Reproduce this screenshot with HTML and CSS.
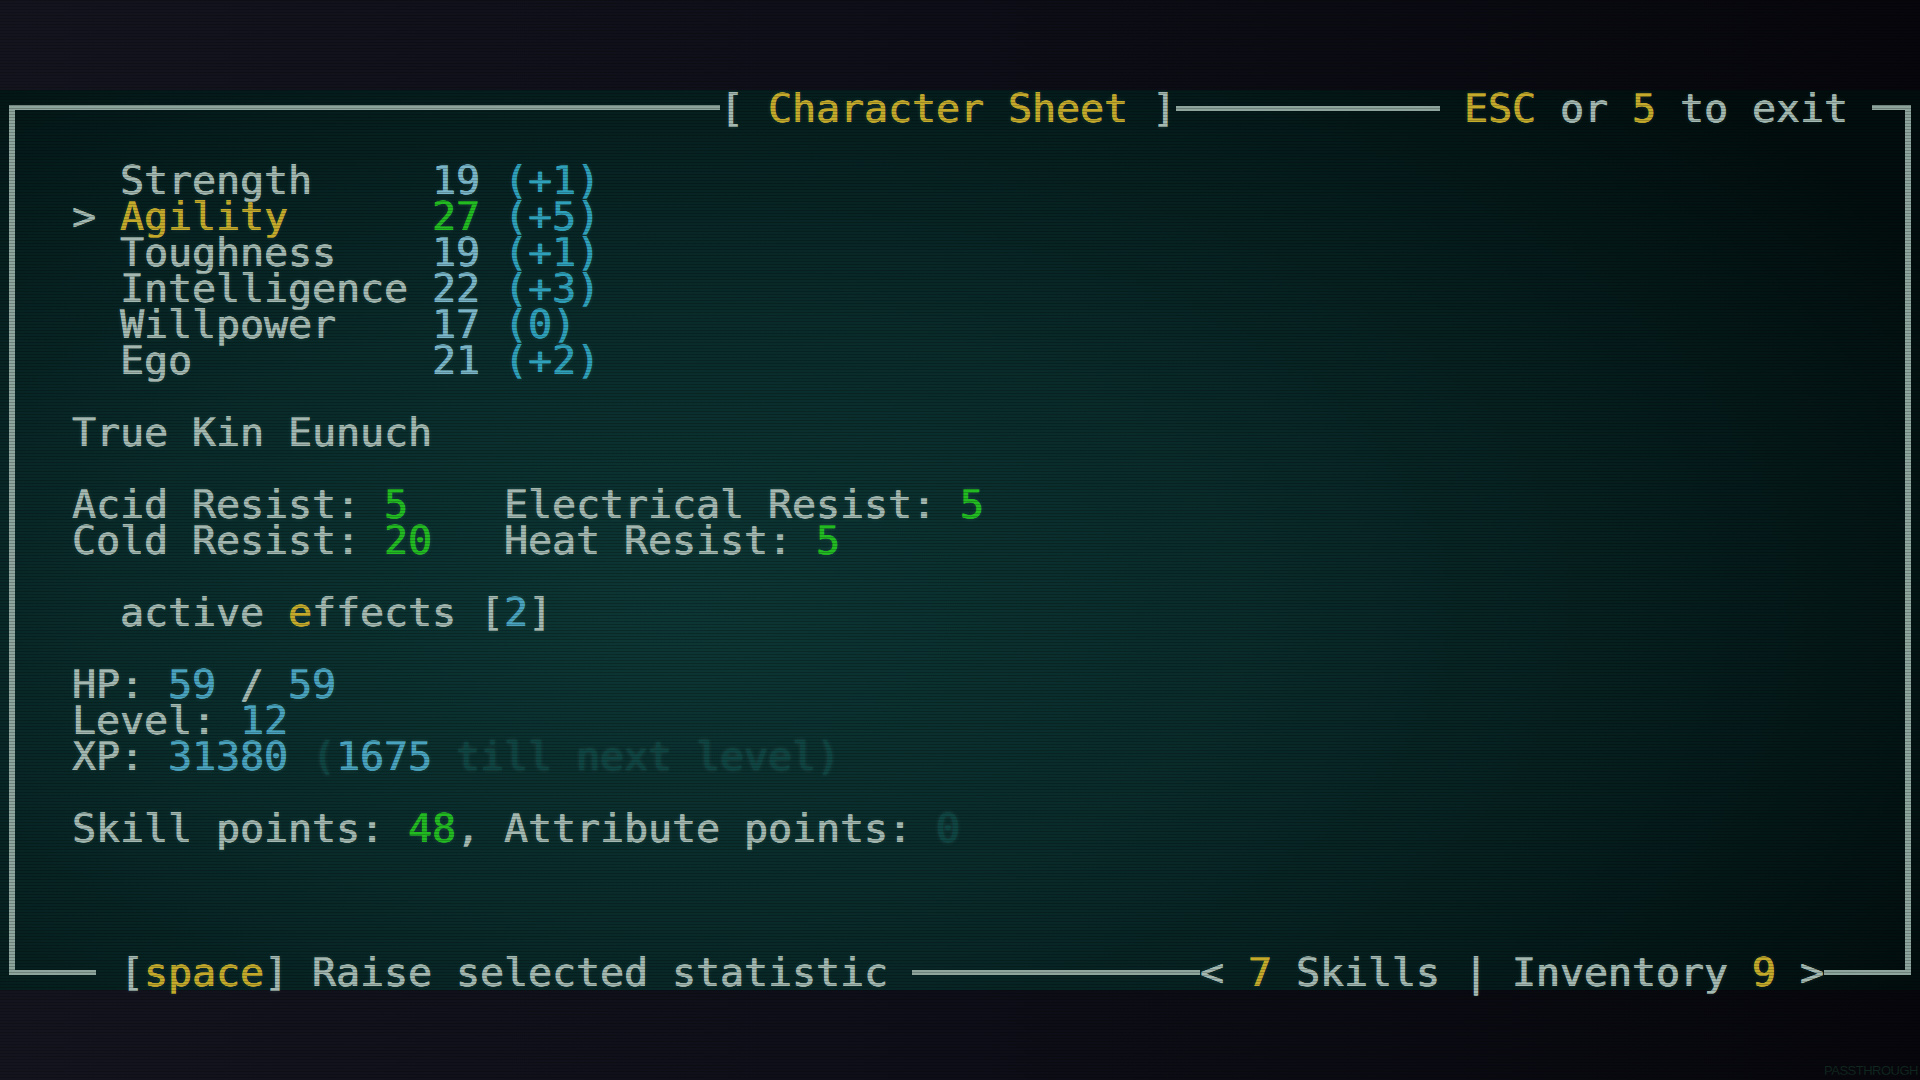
FILE: index.html
```html
<!DOCTYPE html>
<html lang="en">
<head>
<meta charset="utf-8">
<title>Character Sheet</title>
<link rel="stylesheet" href="styles.css">
</head>
<body>
<div class="screen">
  <div class="term">
    <div class="frame-row top">
      <span class="corner-tl"></span><span class="txt"><span class="g">[</span><span class="y"> Character Sheet </span><span class="g">]</span></span><span class="seg seg-top"></span><span class="txt"> <span class="y">ESC</span><span class="g"> or </span><span class="y">5</span><span class="g"> to exit</span> </span><span class="corner-tr"></span>
    </div>
    <div class="body">
      <div class="row"> </div>
      <div class="row"><span class="g">  Strength     </span><span class="v">19</span> <span class="c">(+1)</span></div>
      <div class="row"><span class="g">&gt; </span><span class="y">Agility</span>      <span class="gr">27</span> <span class="c">(+5)</span></div>
      <div class="row"><span class="g">  Toughness    </span><span class="v">19</span> <span class="c">(+1)</span></div>
      <div class="row"><span class="g">  Intelligence </span><span class="v">22</span> <span class="c">(+3)</span></div>
      <div class="row"><span class="g">  Willpower    </span><span class="v">17</span> <span class="c">(0)</span></div>
      <div class="row"><span class="g">  Ego          </span><span class="v">21</span> <span class="c">(+2)</span></div>
      <div class="row"> </div>
      <div class="row"><span class="g">True Kin Eunuch</span></div>
      <div class="row"> </div>
      <div class="row"><span class="g">Acid Resist: </span><span class="gr">5</span>    <span class="g">Electrical Resist: </span><span class="gr">5</span></div>
      <div class="row"><span class="g">Cold Resist: </span><span class="gr">20</span>   <span class="g">Heat Resist: </span><span class="gr">5</span></div>
      <div class="row"> </div>
      <div class="row"><span class="g">  active </span><span class="y">e</span><span class="g">ffects [</span><span class="c2">2</span><span class="g">]</span></div>
      <div class="row"> </div>
      <div class="row"><span class="g">HP: </span><span class="c2">59</span><span class="g"> / </span><span class="c2">59</span></div>
      <div class="row"><span class="g">Level: </span><span class="c2">12</span></div>
      <div class="row"><span class="g">XP: </span><span class="c2">31380</span> <span class="d">(</span><span class="c2">1675</span><span class="d"> till next level)</span></div>
      <div class="row"> </div>
      <div class="row"><span class="g">Skill points: </span><span class="gr">48</span><span class="g">, Attribute points: </span><span class="d">0</span></div>
      <div class="row"> </div>
      <div class="row"> </div>
      <div class="row"> </div>
    </div>
    <div class="frame-row bottom">
      <span class="corner-bl"></span><span class="txt"> <span class="g">[</span><span class="y">space</span><span class="g">] Raise selected statistic</span> </span><span class="seg seg-bottom"></span><span class="txt"><span class="g">&lt; </span><span class="y">7</span><span class="g"> Skills | Inventory </span><span class="y">9</span><span class="g"> &gt;</span></span><span class="corner-br"></span>
    </div>
  </div>
  <div class="watermark">PASSTHROUGH</div>
</div>
</body>
</html>
```
FILE: styles.css
```css
html, body {
  margin: 0;
  padding: 0;
  width: 1920px;
  height: 1080px;
  overflow: hidden;
  background: #0a0a12;
}

.screen {
  position: relative;
  width: 1920px;
  height: 1080px;
  padding-top: 90px;
  box-sizing: border-box;
  background:
    linear-gradient(90deg, #14141f 0%, #0e0e18 50%, #06060c 100%);
  font-family: "DejaVu Sans Mono", "Liberation Mono", monospace;
  font-size: 39.86px;
  line-height: 36px;
}

.screen::after {
  content: "";
  position: absolute;
  inset: 0;
  pointer-events: none;
  background: repeating-linear-gradient(to bottom, rgba(0, 0, 0, 0.22) 0px, rgba(0, 0, 0, 0.22) 1px, transparent 1px, transparent 3px);
}

.term {
  width: 1920px;
  height: 900px;
  display: flex;
  flex-direction: column;
  background:
    radial-gradient(ellipse 75% 85% at 35% 58%, #0c3634 0%, #092b2a 40%, #051c1c 72%, #020d0d 100%);
}

.frame-row {
  height: 36px;
  display: flex;
  white-space: pre;
}

.txt {
  display: block;
  height: 36px;
}

.frame-row .txt,
.row {
  text-shadow: 0.5px 0 0, -0.3px 0 0, 0 0 4px rgba(140, 200, 190, 0.2);
}

.corner-tl {
  align-self: flex-end;
  margin-left: 9px;
  width: 711px;
  height: 21px;
  box-sizing: border-box;
  border-top: 5px solid #8ea59d;
  border-left: 6px solid #8ea59d;
}

.corner-tr {
  align-self: flex-end;
  width: 39px;
  height: 21px;
  box-sizing: border-box;
  border-top: 5px solid #8ea59d;
  border-right: 6px solid #8ea59d;
}

.corner-bl {
  align-self: flex-start;
  margin-left: 9px;
  width: 87px;
  height: 21px;
  box-sizing: border-box;
  border-bottom: 5px solid #8ea59d;
  border-left: 6px solid #8ea59d;
}

.corner-br {
  align-self: flex-start;
  width: 87px;
  height: 21px;
  box-sizing: border-box;
  border-bottom: 5px solid #8ea59d;
  border-right: 6px solid #8ea59d;
}

.seg {
  align-self: center;
  height: 5px;
  background: #8ea59d;
}

.seg-top {
  width: 264px;
}

.seg-bottom {
  width: 288px;
}

.body {
  height: 828px;
  margin: 0 9px;
  border-left: 6px solid #8ea59d;
  border-right: 6px solid #8ea59d;
  padding-left: 57px;
  display: flex;
  flex-direction: column;
}

.row {
  height: 36px;
  white-space: pre;
  color: #a4b9b1;
}

.g { color: #a4b9b1; }
.y { color: #c4ab2c; }
.gr { color: #22bb22; }
.v { color: #7ab6c8; }
.c { color: #2fa1bb; }
.c2 { color: #4aa4bf; }
.row .d { color: #0f4644; }

.watermark {
  position: absolute;
  right: 2px;
  bottom: 2px;
  font-family: "Liberation Sans", Arial, sans-serif;
  font-size: 13px;
  line-height: 14px;
  letter-spacing: -0.5px;
  color: #11261f;
}
```
